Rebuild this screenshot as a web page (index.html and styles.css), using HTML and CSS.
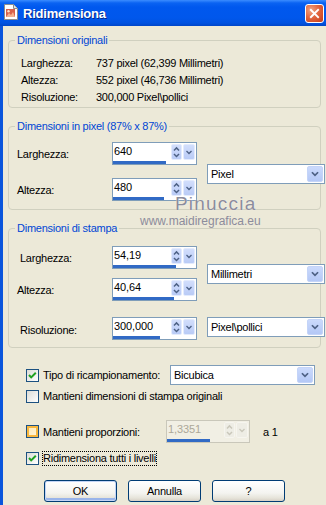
FILE: index.html
```html
<!DOCTYPE html>
<html lang="it">
<head>
    <meta charset="UTF-8">
    <title>Ridimensiona</title>
    <link rel="stylesheet" href="styles.css">
</head>
<body>
<div class="window">
    <div class="titlebar">
        <svg class="app-icon" viewBox="0 0 16 16" width="16" height="16">
            <path d="M1.5 0.5 H10.5 L14.5 4.5 V15.5 H1.5 Z" fill="#fff" stroke="#8d8d8d"/>
            <path d="M10.5 0.5 V4.5 H14.5" fill="#e4e4e4" stroke="#8d8d8d"/>
            <rect x="3" y="5" width="9" height="8" fill="#d9614a"/>
            <path d="M3 13 L6 9 L8 11 L10 8 L12 13 Z" fill="#f3b08f"/>
            <circle cx="5.5" cy="7.3" r="1.2" fill="#fde3c8"/>
        </svg>
        <span class="title">Ridimensiona</span>
        <div class="close-btn">
            <svg viewBox="0 0 18 19" width="18" height="19">
                <path d="M5 5.5 L13 13.5 M13 5.5 L5 13.5" stroke="#fff" stroke-width="2.2" stroke-linecap="square"/>
            </svg>
        </div>
    </div>

    <div class="dialog">
        <!-- watermark over the dialog -->
        <div class="watermark">
            <div class="wm-name">Pinuccia</div>
            <div class="wm-site">www.maidiregrafica.eu</div>
        </div>

        <fieldset class="group group-orig">
            <legend>Dimensioni originali</legend>
            <div class="info-grid">
                <span>Larghezza:</span><span>737 pixel (62,399 Millimetri)</span>
                <span>Altezza:</span><span>552 pixel (46,736 Millimetri)</span>
                <span>Risoluzione:</span><span>300,000 Pixel\pollici</span>
            </div>
        </fieldset>

        <fieldset class="group group-pixel">
            <legend>Dimensioni in pixel (87% x 87%)</legend>
            <div class="size-grid pixel-grid">
                <label class="field-label">Larghezza:</label>
                <div class="spin">
                    <div class="spin-top">
                        <span class="spin-val">640</span>
                        <span class="spin-arrows"><svg viewBox="0 0 10 16"><path d="M2.2 6 L5 3.2 L7.8 6 M2.2 10 L5 12.8 L7.8 10"/></svg></span>
                        <span class="spin-drop"><svg viewBox="0 0 12 16"><path d="M3 6.5 L6 9.5 L9 6.5"/></svg></span>
                    </div>
                    <div class="spin-bar"><span class="spin-fill" style="width:64%"></span></div>
                </div>
                <div class="combo combo-span">
                    <span class="combo-text">Pixel</span>
                    <span class="combo-btn"><svg viewBox="0 0 15 16"><path d="M4 6 L7.5 9.5 L11 6"/></svg></span>
                </div>
                <label class="field-label">Altezza:</label>
                <div class="spin">
                    <div class="spin-top">
                        <span class="spin-val">480</span>
                        <span class="spin-arrows"><svg viewBox="0 0 10 16"><path d="M2.2 6 L5 3.2 L7.8 6 M2.2 10 L5 12.8 L7.8 10"/></svg></span>
                        <span class="spin-drop"><svg viewBox="0 0 12 16"><path d="M3 6.5 L6 9.5 L9 6.5"/></svg></span>
                    </div>
                    <div class="spin-bar"><span class="spin-fill" style="width:61%"></span></div>
                </div>
            </div>
        </fieldset>

        <fieldset class="group group-print">
            <legend>Dimensioni di stampa</legend>
            <div class="size-grid print-grid">
                <label class="field-label indent">Larghezza:</label>
                <div class="spin">
                    <div class="spin-top">
                        <span class="spin-val">54,19</span>
                        <span class="spin-arrows"><svg viewBox="0 0 10 16"><path d="M2.2 6 L5 3.2 L7.8 6 M2.2 10 L5 12.8 L7.8 10"/></svg></span>
                        <span class="spin-drop"><svg viewBox="0 0 12 16"><path d="M3 6.5 L6 9.5 L9 6.5"/></svg></span>
                    </div>
                    <div class="spin-bar"><span class="spin-fill" style="width:76%"></span></div>
                </div>
                <div class="combo combo-span">
                    <span class="combo-text">Millimetri</span>
                    <span class="combo-btn"><svg viewBox="0 0 15 16"><path d="M4 6 L7.5 9.5 L11 6"/></svg></span>
                </div>
                <label class="field-label">Altezza:</label>
                <div class="spin">
                    <div class="spin-top">
                        <span class="spin-val">40,64</span>
                        <span class="spin-arrows"><svg viewBox="0 0 10 16"><path d="M2.2 6 L5 3.2 L7.8 6 M2.2 10 L5 12.8 L7.8 10"/></svg></span>
                        <span class="spin-drop"><svg viewBox="0 0 12 16"><path d="M3 6.5 L6 9.5 L9 6.5"/></svg></span>
                    </div>
                    <div class="spin-bar"><span class="spin-fill" style="width:73%"></span></div>
                </div>
                <label class="field-label indent last">Risoluzione:</label>
                <div class="spin last">
                    <div class="spin-top">
                        <span class="spin-val">300,000</span>
                        <span class="spin-arrows"><svg viewBox="0 0 10 16"><path d="M2.2 6 L5 3.2 L7.8 6 M2.2 10 L5 12.8 L7.8 10"/></svg></span>
                        <span class="spin-drop"><svg viewBox="0 0 12 16"><path d="M3 6.5 L6 9.5 L9 6.5"/></svg></span>
                    </div>
                    <div class="spin-bar"><span class="spin-fill" style="width:57%"></span></div>
                </div>
                <div class="combo combo-top last">
                    <span class="combo-text">Pixel\pollici</span>
                    <span class="combo-btn"><svg viewBox="0 0 15 16"><path d="M4 6 L7.5 9.5 L11 6"/></svg></span>
                </div>
            </div>
        </fieldset>

        <div class="options">
            <div class="opt-row row-resample">
                <div class="check-wrap wide">
                    <span class="checkbox checked"><svg viewBox="0 0 11 11"><path d="M2 5 L4.2 7.4 L8.8 2.8"/></svg></span>
                    <span class="check-text">Tipo di ricampionamento:</span>
                </div>
                <div class="combo combo-resample">
                    <span class="combo-text">Bicubica</span>
                    <span class="combo-btn"><svg viewBox="0 0 15 16"><path d="M4 6 L7.5 9.5 L11 6"/></svg></span>
                </div>
            </div>

            <div class="opt-row row-keep">
                <div class="check-wrap">
                    <span class="checkbox"></span>
                    <span class="check-text">Mantieni dimensioni di stampa originali</span>
                </div>
            </div>

            <div class="opt-row row-ratio">
                <div class="check-wrap narrow">
                    <span class="checkbox hover"></span>
                    <span class="check-text">Mantieni proporzioni:</span>
                </div>
                <div class="spin disabled">
                    <div class="spin-top">
                        <span class="spin-val">1,3351</span>
                        <span class="spin-arrows"><svg viewBox="0 0 10 16"><path d="M2.2 6 L5 3.2 L7.8 6 M2.2 10 L5 12.8 L7.8 10"/></svg></span>
                        <span class="spin-drop"><svg viewBox="0 0 12 16"><path d="M3 6.5 L6 9.5 L9 6.5"/></svg></span>
                    </div>
                    <div class="spin-bar"><span class="spin-fill" style="width:53%"></span></div>
                </div>
                <span class="ratio-suffix">a 1</span>
            </div>

            <div class="opt-row row-layers">
                <div class="check-wrap">
                    <span class="checkbox checked"><svg viewBox="0 0 11 11"><path d="M2 5 L4.2 7.4 L8.8 2.8"/></svg></span>
                    <span class="check-text focused">Ridimensiona tutti i livelli</span>
                </div>
            </div>

            <div class="buttons">
                <button class="btn btn-default">OK</button>
                <button class="btn">Annulla</button>
                <button class="btn">?</button>
            </div>
        </div>
    </div>
</div>
</body>
</html>
```

FILE: styles.css
```css
* { margin: 0; padding: 0; box-sizing: border-box; }

body {
    width: 326px;
    height: 505px;
    overflow: hidden;
    font-family: 'Liberation Sans', Arial, sans-serif;
    font-size: 11px;
    letter-spacing: -0.25px;
    color: #000;
    background: #ECE9D8;
}

.window {
    display: flex;
    flex-direction: column;
    height: 505px;
}

/* title bar */
.titlebar {
    height: 26px;
    display: flex;
    align-items: center;
    padding-left: 3px;
    background: linear-gradient(to bottom, #3b8cff 0, #0a63f2 3px, #0058ee 7px, #0057ec 18px, #0052e0 23px, #0046c8 26px);
}

.app-icon {
    margin-top: -2px;
    flex: none;
}

.title {
    margin-left: 4px;
    color: #fff;
    font-size: 13px;
    font-weight: bold;
    letter-spacing: -0.2px;
    text-shadow: 1px 1px 0 #0a2a8a;
}

.close-btn {
    margin-left: auto;
    margin-right: 2px;
    width: 19px;
    height: 19px;
    border: 1px solid #fff;
    border-radius: 3px;
    background: radial-gradient(circle at 30% 30%, #f0a584 0, #e2663f 45%, #c43b18 100%);
    display: flex;
    align-items: center;
    justify-content: center;
}

.close-btn svg {
    width: 17px;
    height: 17px;
}

/* dialog body */
.dialog {
    position: relative;
    flex: 1;
    border-left: 3px solid #0a55dc;
    padding: 8px 5px 0 5px;
}

.group {
    border: 1px solid #d0d0bf;
    border-radius: 4px;
    padding: 0 2px 0 8px;
    margin: 0;
    min-width: 0;
}

.group legend {
    color: #0046d5;
    line-height: 13px;
    padding: 0 2px;
    margin-left: -2px;
}

.group-orig { padding-top: 7px; padding-bottom: 2px; }
.group-pixel { margin-top: 12px; padding-top: 9px; padding-bottom: 8px; }
.group-print { margin-top: 12px; padding-top: 11px; padding-bottom: 7px; }

.info-grid {
    display: grid;
    grid-template-columns: 75px auto;
    grid-auto-rows: 17px;
    align-items: center;
    margin-left: 4px;
}

.size-grid {
    display: grid;
    grid-template-columns: 85px 85px 118px;
    column-gap: 10px;
    align-items: center;
}

.pixel-grid { grid-template-rows: 23px 23px; row-gap: 13px; }
.print-grid { grid-template-rows: 23px 23px 30px; row-gap: 9px; }
.print-grid > .last { align-self: end; }

.field-label { grid-column: 1; }
.field-label.indent { padding-left: 3px; }
.field-label.last { margin-bottom: 4px; }

.combo-span {
    grid-column: 3;
    grid-row: 1 / span 2;
}

.pixel-grid .combo-span { margin-top: 4px; }

.combo-top { grid-column: 3; }
.print-grid .combo-top { margin-bottom: 3px; }

/* spin edit with slider bar */
.spin {
    width: 85px;
    height: 23px;
    border: 1px solid #7f9db9;
    background: #fff;
    display: flex;
    flex-direction: column;
}

.spin-top {
    flex: 1;
    display: flex;
    padding: 1px 1px 0 0;
}

.spin-val {
    flex: 1;
    padding-left: 1px;
    line-height: 15px;
    letter-spacing: -0.1px;
}

.spin-arrows,
.spin-drop {
    display: flex;
    background: linear-gradient(to bottom, #d2defc, #b9cbf6);
    border: 1px solid #e3ebfd;
    border-radius: 2px;
}

.spin-arrows { width: 11px; margin-right: 1px; }
.spin-drop { width: 12px; }

.spin svg {
    width: 100%;
    height: 100%;
}

.spin svg path {
    fill: none;
    stroke: #4d6185;
    stroke-width: 1.6;
}

.spin-bar {
    height: 4px;
    margin-top: 1px;
}

.spin-fill {
    display: block;
    height: 100%;
    background: #316ac5;
}

.spin.disabled {
    width: 84px;
    border-color: #c9c7ba;
    background: #f1efe4;
}

.spin.disabled .spin-val { color: #aca899; }

.spin.disabled .spin-arrows,
.spin.disabled .spin-drop {
    background: #eeede5;
    border-color: #f6f5ef;
}

.spin.disabled svg path { stroke: #c9c7ba; }

/* combo box */
.combo {
    height: 20px;
    border: 1px solid #7f9db9;
    background: #fff;
    display: flex;
    align-items: stretch;
    padding: 1px;
}

.combo-text {
    flex: 1;
    padding-left: 2px;
    line-height: 16px;
}

.combo-btn {
    width: 16px;
    display: flex;
    background: linear-gradient(to bottom, #cbdafc, #b4c8f6);
    border: 1px solid #c4d4f8;
    border-radius: 2px;
}

.combo-btn svg { width: 100%; height: 100%; }

.combo-btn path {
    fill: none;
    stroke: #4d6185;
    stroke-width: 2;
}

/* options */
.options {
    padding-left: 18px;
    display: flex;
    flex-direction: column;
}

.opt-row {
    display: flex;
    align-items: center;
}

.row-resample { margin-top: 17px; height: 20px; }
.row-keep { height: 22px; }
.row-ratio { margin-top: 13px; height: 23px; }
.row-layers { margin-top: 7px; height: 16px; }

.check-wrap {
    display: flex;
    align-items: center;
    gap: 4px;
}

.check-wrap.wide { width: 144px; }
.check-wrap.narrow { width: 140px; }

.checkbox {
    width: 13px;
    height: 13px;
    flex: none;
    border: 1px solid #1c5180;
    background: linear-gradient(135deg, #dcdcd7, #fff);
    display: flex;
}

.checkbox svg { width: 100%; height: 100%; }

.checkbox path {
    fill: none;
    stroke: #21a121;
    stroke-width: 2;
}

.checkbox.hover {
    background: linear-gradient(135deg, #fde9b5, #fff6dc);
    box-shadow: inset 0 0 0 2px #f8b73e;
}

.combo-resample { width: 145px; height: 20px; }

.ratio-suffix { margin-left: 13px; }

.check-text.focused {
    border: 1px dotted #000;
    margin-left: -1px;
    line-height: 13px;
}

.buttons {
    display: flex;
    gap: 11px;
    margin-top: 14px;
    margin-left: 18px;
}

.btn {
    width: 73px;
    height: 22px;
    border: 1px solid #003c74;
    border-radius: 3px;
    background: linear-gradient(to bottom, #fff 0, #f4f4f0 60%, #e6e4da 85%, #d6d0c5 100%);
    font-family: inherit;
    font-size: 11px;
    letter-spacing: -0.25px;
    color: #000;
}

.btn-default {
    box-shadow: inset 0 0 0 1px #c2d4f5, inset 0 -2px 0 1px #99b4ea;
}

/* watermark */
.watermark {
    position: absolute;
    left: 137px;
    top: 168px;
    color: #8c8c9c;
    pointer-events: none;
}

.wm-name {
    margin-left: 35px;
    font-size: 19px;
    letter-spacing: 1.2px;
    line-height: 20px;
    text-shadow: 0 0 1px #fff;
}

.wm-site {
    font-size: 12px;
    letter-spacing: 0;
    line-height: 12px;
    margin-top: 1px;
}
```
